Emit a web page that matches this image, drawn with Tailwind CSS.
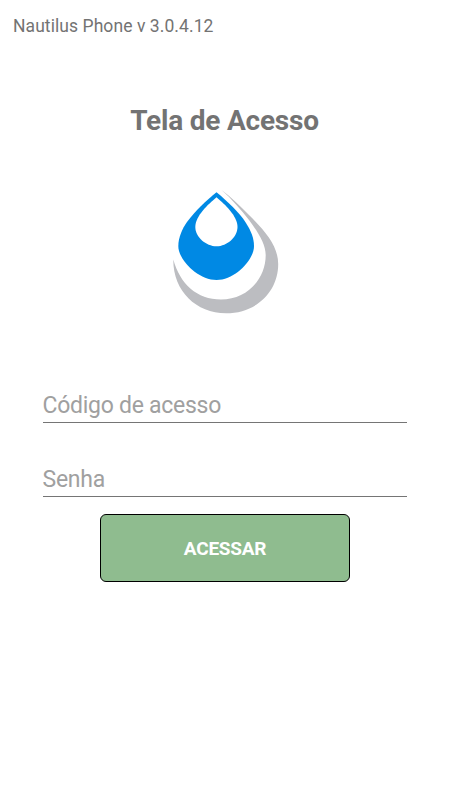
<!DOCTYPE html>
<html lang="pt-BR">

<head>
    <meta charset="UTF-8">
    <meta name="viewport" content="width=device-width, initial-scale=1.0">
    <title>Nautilus Phone</title>
    <script src="https://cdn.jsdelivr.net/npm/@tailwindcss/browser@4"></script>
</head>

<body class="bg-white min-h-screen font-[Roboto,sans-serif] text-[#737373]">
    <!-- Version -->
    <header class="px-[13px] pt-[14px]">
        <p class="text-[17.5px] leading-6 tracking-[0.07px]">Nautilus Phone v 3.0.4.12</p>
    </header>

    <main class="flex flex-col items-center">
        <h1 class="mt-[67px] pr-px text-[28px] leading-8 font-bold tracking-[-0.2px]">Tela de Acesso</h1>

        <!-- Logo -->
        <svg class="mt-[43px] w-[120px] h-[140px]" viewBox="0 0 120 140">
            <path fill="#bcbdc1"
                d="M56.5 10C66 17 75 26 84 35C100 51 113.2 66 113.2 84C113.2 112 91 133.3 61 133.3C31 133.3 8 111 8.3 79.5C15 104 32 119.5 56 119.5C82 119.5 100.7 99 100.7 75C100.7 64 93 52 84 40C76 30 67 19 56.5 10Z" />
            <path fill="#0089e4"
                d="M51.5 12.3C62 21 74 32 81 43C86 51 89 58 89 66C89 80 70 100 51.5 100C33 100 13.3 80 13.3 66C13.3 58 17 49 22 42C30 31 41 21 51.5 12.3Z" />
            <path fill="#fff"
                d="M51.5 17.3C60 24.5 72.5 36 72.5 47C72.5 57 62 66.3 51.5 66.3C41 66.3 30.3 57 30.3 47C30.3 36 43 24.5 51.5 17.3Z" />
        </svg>

        <!-- Login form -->
        <form class="mt-[67px] w-full flex flex-col items-center">
            <input type="text" placeholder="Código de acesso"
                class="mr-px w-[364px] h-9 pt-px text-[23px] tracking-[-0.27px] border-b border-[#757575] outline-none placeholder:text-[#a0a0a0]">
            <input type="password" placeholder="Senha"
                class="mr-px mt-[38px] w-[364px] h-9 pt-px text-[23px] tracking-[-0.27px] border-b border-[#757575] outline-none placeholder:text-[#a0a0a0]">
            <button type="button"
                class="mt-[17px] w-[250px] h-[68px] pt-[2px] bg-[#8fbc8f] border border-black rounded-md text-white text-[19px] font-bold tracking-[-0.25px]">
                ACESSAR
            </button>
        </form>
    </main>
</body>

</html>
